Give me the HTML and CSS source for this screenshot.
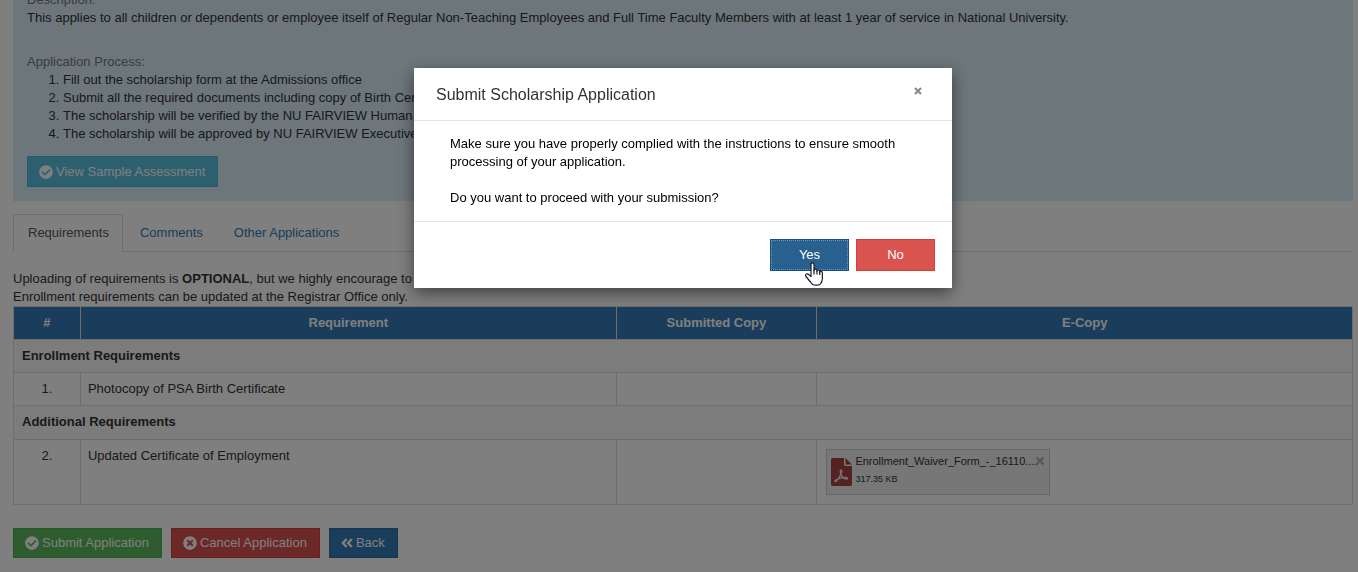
FILE: index.html
```
<!DOCTYPE html>
<html lang="en">
<head>
<meta charset="utf-8">
<title>Scholarship Application</title>
<link rel="stylesheet" href="styles.css">
</head>
<body>
<svg class="sprite" aria-hidden="true">
  <symbol id="check" viewBox="0 0 512 512"><path fill="currentColor" d="M504 256c0 137-111 248-248 248S8 393 8 256 119 8 256 8s248 111 248 248zM227 387l184-184c6-6 6-16 0-23l-22-22c-7-7-17-7-23 0L216 308l-70-70c-6-6-16-6-23 0l-22 22c-7 7-7 17 0 23l104 104c6 6 16 6 22 0z"/></symbol>
  <symbol id="cross" viewBox="0 0 512 512"><path fill="currentColor" d="M256 8C119 8 8 119 8 256s111 248 248 248 248-111 248-248S393 8 256 8zm122 313c5 5 5 12 0 17l-40 40c-5 5-12 5-17 0l-65-66-65 66c-5 5-12 5-17 0l-40-40c-5-5-5-12 0-17l66-65-66-65c-5-5-5-12 0-17l40-40c5-5 12-5 17 0l65 66 65-66c5-5 12-5 17 0l40 40c5 5 5 12 0 17l-66 65z"/></symbol>
  <symbol id="back" viewBox="0 0 12 12"><path fill="none" stroke="currentColor" stroke-width="2.4" d="M5.600 2 1.900 6l3.700 4M10.800 2 7.100 6l3.700 4"/></symbol>
</svg>
<main class="page">
  <section class="info">
    <p class="label">Description:</p>
    <p>This applies to all children or dependents or employee itself of Regular Non-Teaching Employees and Full Time Faculty Members with at least 1 year of service in National University.</p>
    <p class="label process">Application Process:</p>
    <ol class="steps">
      <li>Fill out the scholarship form at the Admissions office</li>
      <li>Submit all the required documents including copy of Birth Certificate</li>
      <li>The scholarship will be verified by the NU FAIRVIEW Human Resources</li>
      <li>The scholarship will be approved by NU FAIRVIEW Executive Director</li>
    </ol>
    <button class="btn btn-info" type="button"><svg class="icon"><use href="#check"/></svg>View Sample Assessment</button>
  </section>
  <nav class="tabs">
    <a class="tab active" href="#requirements">Requirements</a>
    <a class="tab" href="#comments">Comments</a>
    <a class="tab" href="#other">Other Applications</a>
  </nav>
  <p class="note">Uploading of requirements is <b>OPTIONAL</b>, but we highly encourage to upload them.<br>Enrollment requirements can be updated at the Registrar Office only.</p>
  <table class="requirements" id="requirements">
    <colgroup><col class="col-num"><col class="col-name"><col class="col-submitted"><col class="col-copy"></colgroup>
    <thead><tr><th>#</th><th>Requirement</th><th>Submitted Copy</th><th>E-Copy</th></tr></thead>
    <tbody>
      <tr class="group"><td colspan="4">Enrollment Requirements</td></tr>
      <tr><td class="num">1.</td><td>Photocopy of PSA Birth Certificate</td><td></td><td></td></tr>
      <tr class="group group-additional"><td colspan="4">Additional Requirements</td></tr>
      <tr><td class="num">2.</td><td>Updated Certificate of Employment</td><td></td><td>
        <div class="file">
          <svg class="pdf" viewBox="0 0 21 28"><path fill="#a94442" d="M1.500 0H13v6.500q0 1.500 1.500 1.500H21v18.500q0 1.500-1.500 1.500h-18Q0 28 0 26.500v-25Q0 0 1.500 0zM14.500 0 21 6.500h-6.500z"/><path fill="none" stroke="#eee" stroke-width="1.300" d="M10.300 12c-1.500-.5-1.200 3 .1 5.200 1.400 2.500 3.300 4 5.100 4 1.700 0 1.400-1.900-1.300-1.800-3.200.1-6.700 1-9 2.300-2.200 1.200-1.300 2.500.1 1.400 1.700-1.400 3.300-4 4.600-7 .8-2.300 1.300-3.900.4-4.100z"/></svg>
          <div class="file-text"><span class="file-name">Enrollment_Waiver_Form_-_16110....</span><span class="file-size">317.35 KB</span></div>
          <button class="remove" type="button" aria-label="Remove file"><svg viewBox="0 0 10 10"><path d="m1.500 1.500 7 7m0-7-7 7"/></svg></button>
        </div>
      </td></tr>
    </tbody>
  </table>
  <div class="actions">
    <button class="btn btn-success" type="button"><svg class="icon"><use href="#check"/></svg>Submit Application</button>
    <button class="btn btn-danger" type="button"><svg class="icon"><use href="#cross"/></svg>Cancel Application</button>
    <button class="btn btn-primary" type="button"><svg class="icon icon-back"><use href="#back"/></svg>Back</button>
  </div>
</main>
<div class="backdrop">
  <div class="modal" role="dialog" aria-modal="true" aria-labelledby="dialog-title">
    <header class="modal-header"><h4 id="dialog-title">Submit Scholarship Application</h4><button class="close" type="button" aria-label="Close"><svg viewBox="0 0 8 8"><path d="m1 1 6 6m0-6L1 7"/></svg></button></header>
    <div class="modal-body"><p>Make sure you have properly complied with the instructions to ensure smooth processing of your application.</p><p>Do you want to proceed with your submission?</p></div>
    <footer class="modal-footer">
      <button class="choice yes" type="button">Yes
        <svg class="cursor" viewBox="0 0 18 24"><path fill="#fff" stroke="#1b1b2b" stroke-width="1.200" stroke-linejoin="round" d="M6 14.500V2.500Q6 .8 7.500.8T9 2.500v6q0-1.400 1.400-1.400T12 8.500v.8q0-1.300 1.300-1.300T14.700 9.500v.8q.2-1 1.300-1t1.400 1.500v5.700q0 3-2 5.300-1.300 1.400-4.400 1.400-3.700 0-5.500-3.200L1 14.500q-1-1.800.4-2.500 1.200-.5 2.300.5z"/><path fill="none" stroke="#1b1b2b" stroke-width="1.200" d="M9 8v4.500M12 9v3.500M14.700 10v3"/></svg>
      </button>
      <button class="choice no" type="button">No</button>
    </footer>
  </div>
</div>
</body>
</html>
```
FILE: styles.css
```
* { box-sizing: border-box; }
body { margin: 0; overflow: hidden; background: #fff; color: #333; font: 13px/18px "Liberation Sans", Arial, sans-serif; }
p, h4, ol { margin: 0; }
button { font: inherit; cursor: pointer; }
.sprite { display: none; }
.page { padding: 0 5px 0 13px; }
.info { margin-top: -9px; padding: 0 14px 14px; background: #d9edf7; }
.label { color: #777; }
.process { margin-top: 26px; }
.steps { padding-left: 36px; margin-bottom: 13px; }
.btn { display: inline-flex; align-items: center; gap: 3px; height: 30px; padding: 0 12px 0 11px; border: 1px solid; color: #fff; }
.icon { width: 14px; height: 14px; }
.icon-back { width: 12px; height: 12px; }
.btn-info { height: 31px; background: #5bc0de; border-color: #46b8da; }
.info .btn { display: flex; }
.btn-success { background: #5cb85c; border-color: #4cae4c; }
.btn-danger { background: #d9534f; border-color: #d43f3a; }
.btn-primary { background: #337ab7; border-color: #2e6da4; }
.tabs { display: flex; gap: 2px; margin-top: 13px; border-bottom: 1px solid #ddd; }
.tab { margin-bottom: -1px; padding: 9px 13px 9px 14px; border: 1px solid transparent; color: #337ab7; text-decoration: none; }
.tab.active { border-color: #ddd #ddd #fff; background: #fff; color: #555; }
.note { margin-top: 18px; }
.requirements { width: 100%; table-layout: fixed; border-collapse: collapse; }
.col-num { width: 5%; }
.col-name { width: 40%; }
.col-submitted { width: 15%; }
.requirements th, .requirements td { padding: 7px; border: 1px solid #ddd; vertical-align: top; text-align: left; }
.requirements th { background: #337ab7; color: #fff; text-align: center; }
.requirements .num { text-align: center; }
.requirements .group td { padding: 7px 8px; background: #f9f9f9; font-weight: bold; }
.requirements .group-additional td { padding-bottom: 8px; }
.file { display: flex; gap: 3px; width: 224px; height: 46px; margin: 2px; padding: 2px 4px; border: 1px solid #ccc; background: #eee; }
.pdf { flex: none; width: 21px; height: 28px; margin-top: 6px; }
.file-text { flex: 1; min-width: 0; white-space: nowrap; }
.file-text span { display: block; }
.file-name { font-size: 11px; }
.file-size { font-size: 9px; }
.remove { flex: none; width: 10px; height: 10px; margin-top: 4px; padding: 0; border: 0; background: none; }
.remove svg, .close svg { display: block; width: 100%; height: 100%; fill: none; stroke: #aaa; stroke-width: 2; }
.actions { display: flex; gap: 9px; margin-top: 23px; }
.backdrop { position: fixed; inset: 0; padding: 68px 0 0 8px; background: rgba(0, 0, 0, .5); }
.modal { width: 538px; max-width: 100%; margin: 0 auto; background: #fff; color: #000; box-shadow: 0 5px 15px rgba(0, 0, 0, .5); }
.modal-header { display: flex; justify-content: space-between; padding: 18px 30px 16px 22px; border-bottom: 1px solid #e5e5e5; color: #333; }
.modal-header h4 { font-size: 16px; font-weight: normal; line-height: 18px; }
.close { width: 8px; height: 8px; margin-top: 1px; padding: 0; border: 0; background: none; }
.close svg { stroke: #888; }
.modal-body { padding: 14px 36px; }
.modal-body p + p { margin-top: 18px; }
.modal-footer { display: flex; justify-content: flex-end; gap: 7px; padding: 17px; border-top: 1px solid #e5e5e5; }
.choice { position: relative; width: 79px; height: 32px; padding: 0; border: 1px solid; color: #fff; }
.yes { background: #286090; border-color: #204d74; outline: 1px dotted #5b9bd0; outline-offset: -2px; }
.no { background: #d9534f; border-color: #d43f3a; }
.cursor { position: absolute; left: 34px; top: 22px; width: 18px; height: 24px; }
```
